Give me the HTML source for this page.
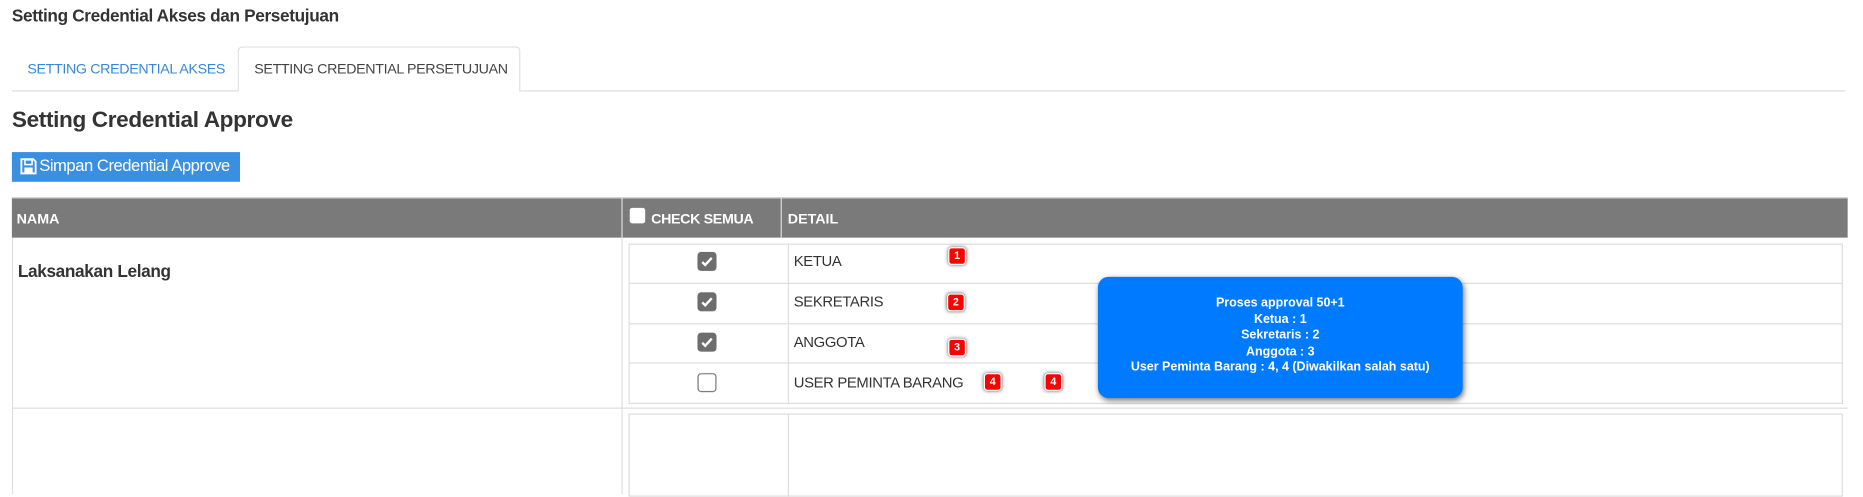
<!DOCTYPE html>
<html><head><style>
*{box-sizing:border-box;margin:0;padding:0}
body{width:1863px;height:416px;background:#fff;font-family:"Liberation Sans",sans-serif;color:#333;overflow:hidden}
#w{position:absolute;left:0;top:0;width:1568px;height:350px;transform:scale(1.1882);transform-origin:0 0}
.a{position:absolute}
.t{white-space:nowrap}
.cb{position:absolute;width:16px;height:16px;border-radius:3px;background:#6d6d6d;left:587px}
.cb svg{position:absolute;left:2px;top:2px}
.cbe{background:#fff;border:1.5px solid #777}
.bd{position:absolute;width:15px;height:15px;background:#f00;border:1.5px solid #fff;border-radius:3px;box-shadow:0 0 3px rgba(0,0,0,.6);color:#fff;font:bold 9px "Liberation Sans",sans-serif;text-align:center;line-height:12px}
.hl{position:absolute;height:1px;background:#ddd}
.vl{position:absolute;width:1px;background:#ddd}
.lab{position:absolute;left:668px;font-size:12.5px;color:#333;letter-spacing:-.3px}
</style></head><body><div id="w">
<div class="a t" style="left:10px;top:6px;font-size:14.5px;font-weight:bold;color:#333;letter-spacing:-.3px">Setting Credential Akses dan Persetujuan</div>
<div class="hl" style="left:10px;top:76px;width:1543px"></div>
<div class="a t" style="left:23px;top:51px;font-size:12px;color:#3a87d9;letter-spacing:-.3px">SETTING CREDENTIAL AKSES</div>
<div class="a" style="left:200px;top:39px;width:238px;height:38px;border:1px solid #ddd;border-bottom:none;border-radius:4px 4px 0 0;background:#fff"></div>
<div class="a t" style="left:214px;top:51px;font-size:12px;color:#444;letter-spacing:-.3px">SETTING CREDENTIAL PERSETUJUAN</div>
<div class="a t" style="left:10px;top:91px;font-size:19px;font-weight:bold;color:#333;letter-spacing:-.3px">Setting Credential Approve</div>
<div class="a" style="left:10px;top:128px;width:192px;height:25px;background:#3b8fe0"></div>
<svg class="a" style="left:17px;top:133px" width="14" height="14" viewBox="0 0 14 14"><path d="M1 1h10l2 2v10H1z" fill="none" stroke="#fff" stroke-width="1.6"/><rect x="4" y="1.5" width="6" height="4" fill="none" stroke="#fff" stroke-width="1.3"/><rect x="3.5" y="8" width="7" height="4.5" fill="#fff"/></svg>
<div class="a t" style="left:33px;top:131px;font-size:14px;color:#fff;letter-spacing:-.4px">Simpan Credential Approve</div>
<div class="a" style="left:10px;top:166px;width:1545px;height:34px;background:#7a7a7a;border-top:1px solid #ddd"></div>
<div class="a" style="left:523px;top:167px;width:1px;height:33px;background:#ddd"></div>
<div class="a" style="left:657px;top:167px;width:1px;height:33px;background:#ddd"></div>
<div class="a t" style="left:14px;top:177px;font-size:12px;font-weight:bold;color:#fff">NAMA</div>
<div class="a" style="left:530px;top:175px;width:13px;height:13px;background:#fff;border-radius:2px"></div>
<div class="a t" style="left:548px;top:177px;font-size:12px;font-weight:bold;color:#fff;letter-spacing:-.3px">CHECK SEMUA</div>
<div class="a t" style="left:663px;top:177px;font-size:12px;font-weight:bold;color:#fff">DETAIL</div>
<div class="vl" style="left:10px;top:200px;height:216px"></div>
<div class="vl" style="left:523px;top:200px;height:216px"></div>
<div class="hl" style="left:10px;top:343px;width:1545px"></div>
<div class="a t" style="left:15px;top:221px;font-size:14.5px;font-weight:bold;color:#333;letter-spacing:-.3px">Laksanakan Lelang</div>
<div class="a" style="left:529px;top:205px;width:1022px;height:135px;border:1px solid #ddd"></div>
<div class="hl" style="left:529px;top:238px;width:1022px"></div>
<div class="hl" style="left:529px;top:272px;width:1022px"></div>
<div class="hl" style="left:529px;top:305px;width:1022px"></div>
<div class="vl" style="left:663px;top:205px;height:135px"></div>
<div class="a" style="left:529px;top:348px;width:1022px;height:70px;border:1px solid #ddd"></div>
<div class="vl" style="left:663px;top:348px;height:70px"></div>
<div class="cb" style="top:212px"><svg width="12" height="12"><path d="M2 6.5l2.5 2.5L10 3" fill="none" stroke="#fff" stroke-width="2"/></svg></div>
<div class="cb" style="top:246px"><svg width="12" height="12"><path d="M2 6.5l2.5 2.5L10 3" fill="none" stroke="#fff" stroke-width="2"/></svg></div>
<div class="cb" style="top:280px"><svg width="12" height="12"><path d="M2 6.5l2.5 2.5L10 3" fill="none" stroke="#fff" stroke-width="2"/></svg></div>
<div class="cb cbe" style="top:314px"></div>
<div class="lab t" style="top:213px">KETUA</div>
<div class="lab t" style="top:247px">SEKRETARIS</div>
<div class="lab t" style="top:281px">ANGGOTA</div>
<div class="lab t" style="top:315px">USER PEMINTA BARANG</div>
<div class="bd" style="left:798px;top:208px">1</div>
<div class="bd" style="left:797px;top:247px">2</div>
<div class="bd" style="left:798px;top:285px">3</div>
<div class="bd" style="left:828px;top:314px">4</div>
<div class="bd" style="left:879px;top:314px">4</div>
<div class="a" style="left:924px;top:233px;width:307px;height:102px;background:#007bff;border-radius:9px;box-shadow:1px 2px 5px rgba(0,0,0,.55);color:#fff;font-size:10.5px;font-weight:bold;text-align:center;line-height:13.5px;padding-top:16px">Proses approval 50+1<br>Ketua : 1<br>Sekretaris : 2<br>Anggota : 3<br>User Peminta Barang : 4, 4 (Diwakilkan salah satu)</div>
</div></body></html>
